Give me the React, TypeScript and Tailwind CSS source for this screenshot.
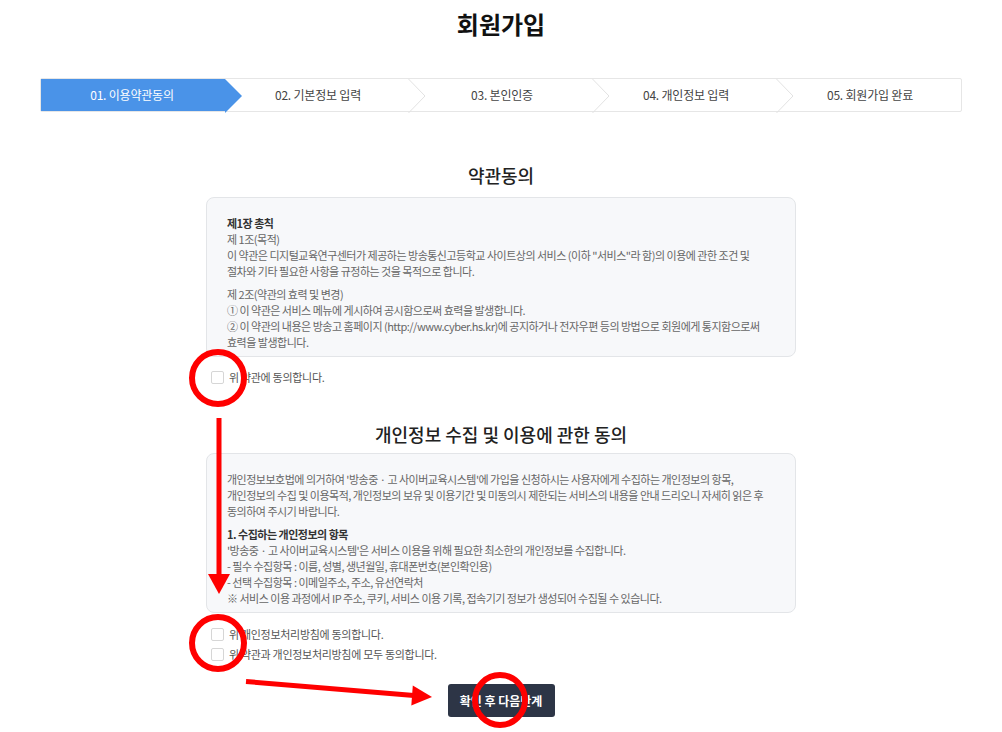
const steps = [
  '01. 이용약관동의',
  '02. 기본정보 입력',
  '03. 본인인증',
  '04. 개인정보 입력',
  '05. 회원가입 완료',
];

function Stepper() {
  return (
    <div className="mx-[40px] mt-[36px] flex h-[34px] rounded-[2px] border border-[#e6e6e6] bg-white">
      {steps.map((label, i) => (
        <div
          key={label}
          className={`relative flex flex-1 items-center justify-center text-[12px] tracking-[-0.2px] ${
            i === 0 ? 'bg-[#4a93e8] text-white' : 'text-[#444]'
          }`}
        >
          <span className={i === 0 ? 'pr-[2px]' : 'pl-[2px]'}>{label}</span>
          {i === 0 && (
            <svg className="absolute right-[-17px] top-0 z-10 h-[34px] w-[17px]" viewBox="0 0 17 34">
              <polygon points="0,0 17,17 0,34" fill="#4a93e8" />
            </svg>
          )}
          {i > 0 && i < steps.length - 1 && (
            <svg className="absolute right-[-17px] top-0 z-10 h-[34px] w-[18px]" viewBox="0 0 18 34">
              <polyline points="0.5,0 17,17 0.5,34" fill="none" stroke="#e2e2e2" strokeWidth="1" />
            </svg>
          )}
        </div>
      ))}
    </div>
  );
}

function TermsBox({ children }: { children: React.ReactNode }) {
  return (
    <div className="mx-auto h-[160px] w-[590px] overflow-hidden rounded-[8px] border border-[#e3e5e8] bg-[#f7f8fa] px-[20px] pt-[17px] text-[11px] leading-[16px] tracking-[-0.5px] text-[#666] whitespace-nowrap">
      {children}
    </div>
  );
}

function Agree({ label }: { label: string }) {
  return (
    <label className="flex h-[20px] items-center gap-[5px] text-[11px] tracking-[-0.3px] text-[#555]">
      <input
        type="checkbox"
        className="h-[13px] w-[13px] appearance-none rounded-[2px] border border-[#d6d6d6] bg-white"
      />
      <span>{label}</span>
    </label>
  );
}

function Annotations() {
  return (
    <svg className="pointer-events-none absolute left-0 top-0 h-[732px] w-[1002px]" viewBox="0 0 1002 732">
      <g fill="none" stroke="#ff0000" strokeWidth="6">
        <circle cx="218" cy="378" r="26" />
        <circle cx="218" cy="643" r="26" />
        <circle cx="500" cy="700" r="25" />
      </g>
      <line x1="219" y1="418" x2="219" y2="576" stroke="#ff0000" strokeWidth="5" />
      <polygon points="208,574 230,574 219,594" fill="#ff0000" />
      <line x1="246" y1="681.5" x2="414" y2="695.5" stroke="#ff0000" strokeWidth="5" />
      <polygon points="432,697 411.3,705.4 412.8,685.5" fill="#ff0000" />
    </svg>
  );
}

export default function App() {
  return (
    <div
      className="relative h-[732px] w-[1002px] overflow-hidden bg-white pt-[6px]"
      style={{ fontFamily: '"Noto Sans CJK KR", "Noto Sans", sans-serif' }}
    >
      <h1 className="text-center text-[24px] font-bold leading-[36px] text-[#111]">회원가입</h1>

      <Stepper />

      <h2 className="mt-[50px] text-center text-[18px] font-medium leading-[26px] text-[#222]">약관동의</h2>
      <div className="mt-[9px]">
        <TermsBox>
          <p className="font-bold text-[#333]">제1장 총칙</p>
          <p>제 1조(목적)</p>
          <p>이 약관은 디지털교육연구센터가 제공하는 방송통신고등학교 사이트상의 서비스 (이하 "서비스"라 함)의 이용에 관한 조건 및</p>
          <p>절차와 기타 필요한 사항을 규정하는 것을 목적으로 합니다.</p>
          <p className="mt-[7px]">제 2조(약관의 효력 및 변경)</p>
          <p>① 이 약관은 서비스 메뉴에 게시하여 공시함으로써 효력을 발생합니다.</p>
          <p>② 이 약관의 내용은 방송고 홈페이지 (http://www.cyber.hs.kr)에 공지하거나 전자우편 등의 방법으로 회원에게 통지함으로써</p>
          <p>효력을 발생합니다.</p>
        </TermsBox>
      </div>
      <div className="mx-auto mt-[10px] w-[590px] pl-[5px]">
        <Agree label="위 약관에 동의합니다." />
      </div>

      <h2 className="mt-[34px] text-center text-[18px] font-medium leading-[26px] text-[#222]">
        개인정보 수집 및 이용에 관한 동의
      </h2>
      <div className="mt-[6px]">
        <TermsBox>
          <p>개인정보보호법에 의거하여 '방송중 · 고 사이버교육시스템'에 가입을 신청하시는 사용자에게 수집하는 개인정보의 항목,</p>
          <p>개인정보의 수집 및 이용목적, 개인정보의 보유 및 이용기간 및 미동의시 제한되는 서비스의 내용을 안내 드리오니 자세히 읽은 후</p>
          <p>동의하여 주시기 바랍니다.</p>
          <p className="mt-[7px] font-bold text-[#333]">1. 수집하는 개인정보의 항목</p>
          <p>'방송중 · 고 사이버교육시스템'은 서비스 이용을 위해 필요한 최소한의 개인정보를 수집합니다.</p>
          <p>- 필수 수집항목 : 이름, 성별, 생년월일, 휴대폰번호(본인확인용)</p>
          <p>- 선택 수집항목 : 이메일주소, 주소, 유선연락처</p>
          <p>※ 서비스 이용 과정에서 IP 주소, 쿠키, 서비스 이용 기록, 접속기기 정보가 생성되어 수집될 수 있습니다.</p>
        </TermsBox>
      </div>
      <div className="mx-auto mt-[11px] w-[590px] pl-[5px]">
        <Agree label="위 개인정보처리방침에 동의합니다." />
        <Agree label="위 약관과 개인정보처리방침에 모두 동의합니다." />
      </div>

      <div className="mt-[20px] flex justify-center">
        <button className="h-[33px] w-[107px] rounded-[3px] bg-[#2d3546] text-[12px] font-bold text-white">
          확인 후 다음단계
        </button>
      </div>

      <Annotations />
    </div>
  );
}
